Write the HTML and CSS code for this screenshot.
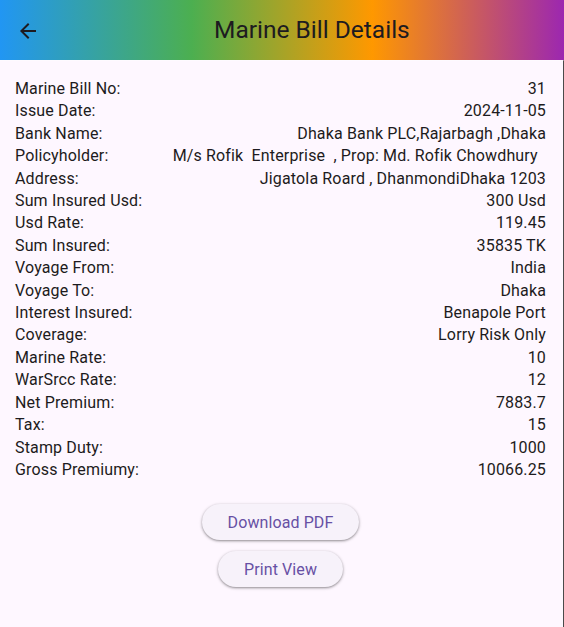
FILE: index.html
```html
<!DOCTYPE html>
<html>
<head>
<meta charset="utf-8">
<link rel="stylesheet" href="styles.css">
</head>
<body>
<div class="app">
  <header class="appbar">
    <button class="back" aria-label="Back">
      <svg width="24" height="24" viewBox="0 0 24 24"><path d="M20 11H7.83l5.59-5.59L12 4l-8 8 8 8 1.41-1.41L7.83 13H20v-2z" fill="#1d1b20"/></svg>
    </button>
    <h1 class="title">Marine Bill Details</h1>
  </header>
  <main class="content">
    <div class="rows">
      <div class="row"><span>Marine Bill No:</span><span class="val">31</span></div>
      <div class="row"><span>Issue Date:</span><span class="val">2024-11-05</span></div>
      <div class="row"><span>Bank Name:</span><span class="val">Dhaka Bank PLC,Rajarbagh ,Dhaka</span></div>
      <div class="row"><span>Policyholder:</span><span class="val">M/s Rofik  Enterprise  , Prop: Md. Rofik Chowdhury  </span></div>
      <div class="row"><span>Address:</span><span class="val">Jigatola Roard , DhanmondiDhaka 1203</span></div>
      <div class="row"><span>Sum Insured Usd:</span><span class="val">300 Usd</span></div>
      <div class="row"><span>Usd Rate:</span><span class="val">119.45</span></div>
      <div class="row"><span>Sum Insured:</span><span class="val">35835 TK</span></div>
      <div class="row"><span>Voyage From:</span><span class="val">India</span></div>
      <div class="row"><span>Voyage To:</span><span class="val">Dhaka</span></div>
      <div class="row"><span>Interest Insured:</span><span class="val">Benapole Port</span></div>
      <div class="row"><span>Coverage:</span><span class="val">Lorry Risk Only</span></div>
      <div class="row"><span>Marine Rate:</span><span class="val">10</span></div>
      <div class="row"><span>WarSrcc Rate:</span><span class="val">12</span></div>
      <div class="row"><span>Net Premium:</span><span class="val">7883.7</span></div>
      <div class="row"><span>Tax:</span><span class="val">15</span></div>
      <div class="row"><span>Stamp Duty:</span><span class="val">1000</span></div>
      <div class="row"><span>Gross Premiumy:</span><span class="val">10066.25</span></div>
    </div>
    <div class="actions">
      <button class="btn">Download PDF</button>
      <button class="btn">Print View</button>
    </div>
  </main>
</div>
</body>
</html>
```
FILE: styles.css
```css
* { box-sizing: border-box; }
html, body { margin: 0; padding: 0; }
body {
  background: #fef7ff;
  font-family: Roboto, "Noto Sans", sans-serif;
  color: #1d1b20;
  width: 564px;
  height: 627px;
  overflow: hidden;
}
.app {
  display: flex;
  flex-direction: column;
  height: 627px;
}
.appbar {
  height: 60px;
  flex: none;
  display: flex;
  align-items: center;
  background: linear-gradient(90deg, #2196f3 0%, #4caf50 34%, #ff9800 66%, #9c27b0 100%);
  box-shadow: 0 1px 0 rgba(255,255,255,0.35);
  position: relative;
  z-index: 1;
}
.back {
  width: 24px;
  height: 24px;
  margin-left: 16px;
  margin-top: 2px;
  padding: 0;
  border: 0;
  background: none;
  display: flex;
}
.title {
  margin: 0 0 0 174px;
  font-size: 24.5px;
  font-weight: 400;
  line-height: 30px;
  letter-spacing: 0;
  color: #1d1b20;
}
.content {
  flex: 1;
  border-right: 1px solid #4a4a4a;
  padding: 18px 17px 0 15px;
}
.rows {
  display: flex;
  flex-direction: column;
}
.row {
  display: flex;
  justify-content: space-between;
  font-size: 16px;
  line-height: 22.4px;
  letter-spacing: 0.15px;
  color: #1d1b20;
}
.val {
  white-space: pre;
  text-align: right;
}
.actions {
  display: flex;
  flex-direction: column;
  align-items: center;
  gap: 11px;
  margin-top: 23px;
}
.btn {
  height: 36px;
  padding: 0 26px;
  border: 0;
  border-radius: 18px;
  background: #f7f2fa;
  color: #6750a4;
  font-family: Roboto, "Noto Sans", sans-serif;
  font-size: 16px;
  letter-spacing: 0.1px;
  box-shadow: 0 1px 2px rgba(0,0,0,0.3), 0 1px 3px 1px rgba(0,0,0,0.12);
}
```
